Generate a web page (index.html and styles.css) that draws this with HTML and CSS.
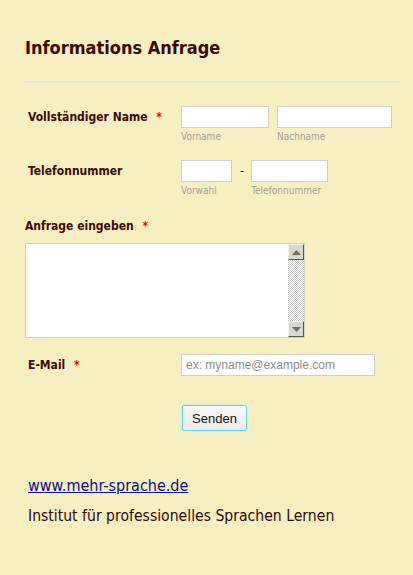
FILE: index.html
```html
<!DOCTYPE html>
<html lang="de">
<head>
<meta charset="utf-8">
<title>Informations Anfrage</title>
<link rel="stylesheet" href="styles.css">
</head>
<body>
<div class="page">
  <h1 class="title">Informations Anfrage</h1>
  <div class="divider"></div>

  <div class="row row-name">
    <label class="label">Vollständiger Name <span class="req">*</span></label>
    <div class="fields">
      <div class="sub">
        <input class="input w-first" type="text">
        <span class="hint">Vorname</span>
      </div>
      <div class="sub">
        <input class="input w-last" type="text">
        <span class="hint">Nachname</span>
      </div>
    </div>
  </div>

  <div class="row row-phone">
    <label class="label">Telefonnummer</label>
    <div class="fields">
      <div class="sub">
        <input class="input w-area" type="text">
        <span class="hint">Vorwahl</span>
      </div>
      <span class="dash">-</span>
      <div class="sub">
        <input class="input w-phone" type="text">
        <span class="hint">Telefonnummer</span>
      </div>
    </div>
  </div>

  <div class="block-msg">
    <label class="label label-top">Anfrage eingeben <span class="req">*</span></label>
    <div class="textbox">
      <textarea class="textarea"></textarea>
      <div class="scrollbar">
        <div class="sb-btn"><svg width="9" height="5" viewBox="0 0 9 5"><path d="M0 5 L4.5 0 L9 5 Z" fill="#6b6b6b"/></svg></div>
        <div class="sb-track"></div>
        <div class="sb-btn"><svg width="9" height="5" viewBox="0 0 9 5"><path d="M0 0 L9 0 L4.5 5 Z" fill="#6b6b6b"/></svg></div>
      </div>
    </div>
  </div>

  <div class="row row-mail">
    <label class="label">E-Mail <span class="req">*</span></label>
    <div class="fields">
      <input class="input w-mail" type="text" placeholder="ex: myname@example.com">
    </div>
  </div>

  <div class="actions">
    <button class="btn" type="button">Senden</button>
  </div>

  <div class="footer">
    <a class="link" href="#">www.mehr-sprache.de</a>
    <p class="tagline">Institut für professionelles Sprachen Lernen</p>
  </div>
</div>
</body>
</html>
```

FILE: styles.css
```css
html, body {
  margin: 0;
  padding: 0;
  background: #f8efc1;
}
body {
  font-family: "DejaVu Sans Condensed", "DejaVu Sans", sans-serif;
  color: #3b0b0b;
  width: 413px;
  height: 575px;
  overflow: hidden;
}
.page {
  padding: 37px 12px 0 24px;
}
.title {
  margin: 0 0 0 1px;
  font-size: 18px;
  line-height: 22px;
  font-weight: bold;
  color: #3a0909;
}
.divider {
  margin-top: 22px;
  height: 2px;
  background: #e9e5de;
  width: 376px;
}
.row {
  display: flex;
  align-items: flex-start;
}
.label {
  width: 157px;
  padding-left: 4px;
  box-sizing: border-box;
  font-size: 12px;
  font-weight: bold;
  line-height: 22px;
  color: #3a0909;
  flex: none;
}
.req {
  color: #f00000;
  margin-left: 5px;
}
.fields {
  display: flex;
  align-items: flex-start;
}
.sub {
  display: flex;
  flex-direction: column;
  margin-right: 8px;
}
.input {
  box-sizing: border-box;
  height: 22px;
  border: 1px solid #cfcfcf;
  background: #fff;
  margin: 0;
  padding: 2px 4px;
  font-family: "Liberation Sans", Arial, sans-serif;
  font-size: 12px;
  outline: none;
}
.input::placeholder {
  color: #8c8c8c;
}
.w-first { width: 88px; }
.w-last { width: 115px; }
.w-area { width: 51px; }
.w-phone { width: 77px; }
.w-mail { width: 194px; }
.hint {
  font-size: 10px;
  line-height: 12px;
  margin-top: 3px;
  color: #a6a09a;
}
.dash {
  font-size: 13px;
  line-height: 22px;
  color: #3a0909;
  margin: 0 7px 0 0;
}
.row-name { margin-top: 23px; }
.row-phone { margin-top: 17px; }
.block-msg {
  margin-top: 20px;
  padding-left: 1px;
}
.label-top {
  display: block;
  width: auto;
  padding-left: 0;
  line-height: 18px;
}
.textbox {
  margin-top: 8px;
  display: flex;
  width: 280px;
  height: 95px;
  box-sizing: border-box;
  border: 1px solid #cfcfcf;
  background: #fff;
}
.textarea {
  flex: 1;
  border: none;
  resize: none;
  outline: none;
  margin: 0;
  padding: 2px;
  background: #fff;
}
.scrollbar {
  width: 16px;
  display: flex;
  flex-direction: column;
}
.sb-btn {
  height: 16px;
  box-sizing: border-box;
  background: #d9d6d0;
  border-top: 1px solid #f2f2f2;
  border-left: 1px solid #f2f2f2;
  border-right: 1px solid #555;
  border-bottom: 1px solid #555;
  display: flex;
  align-items: center;
  justify-content: center;
}
.sb-track {
  flex: 1;
  background: repeating-conic-gradient(#ffffff 0 25%, #c9c9c9 0 50%) 0 0 / 2px 2px;
}
.row-mail { margin-top: 16px; }
.actions {
  margin-top: 29px;
  padding-left: 158px;
}
.btn {
  width: 65px;
  height: 26px;
  box-sizing: border-box;
  border: 1px solid #5fd3f0;
  border-radius: 2px;
  background: linear-gradient(#f8f8f8, #ebebeb);
  font-family: "Liberation Sans", Arial, sans-serif;
  font-size: 13px;
  color: #111;
  padding: 0;
  box-shadow: 0 0 2px #9fe6f8;
}
.footer {
  margin-top: 45px;
  padding-left: 4px;
}
.link {
  display: block;
  font-size: 16px;
  line-height: 20px;
  color: #0a0a8a;
  text-decoration: underline;
}
.tagline {
  margin: 10px 0 0;
  font-size: 15.6px;
  line-height: 20px;
  color: #2a0a0a;
}
```
